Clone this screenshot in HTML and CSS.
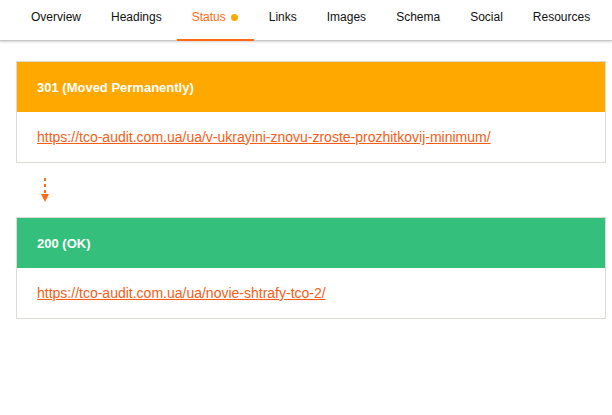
FILE: index.html
```html
<!DOCTYPE html>
<html>
<head>
<meta charset="utf-8">
<link rel="stylesheet" href="styles.css">
</head>
<body>
<nav class="tabs">
  <a class="tab">Overview</a>
  <a class="tab">Headings</a>
  <a class="tab active">Status<span class="dot"></span></a>
  <a class="tab">Links</a>
  <a class="tab">Images</a>
  <a class="tab">Schema</a>
  <a class="tab">Social</a>
  <a class="tab">Resources</a>
</nav>
<main class="content">
  <section class="card">
    <div class="card-head redirect">301 (Moved Permanently)</div>
    <div class="card-body"><a class="url" href="#">https://tco-audit.com.ua/ua/v-ukrayini-znovu-zroste-prozhitkovij-minimum/</a></div>
  </section>
  <div class="arrow">
    <svg width="10" height="26" viewBox="0 0 10 26">
      <line x1="5" y1="0" x2="5" y2="17" stroke="#ff6a13" stroke-width="2" stroke-dasharray="3 3"/>
      <polygon points="1,16 9,16 5,24" fill="#ff6a13"/>
    </svg>
  </div>
  <section class="card">
    <div class="card-head ok">200 (OK)</div>
    <div class="card-body"><a class="url" href="#">https://tco-audit.com.ua/ua/novie-shtrafy-tco-2/</a></div>
  </section>
</main>
</body>
</html>
```

FILE: styles.css
```css
* { box-sizing: border-box; }
html, body { margin: 0; padding: 0; background: #fff; }
body { font-family: "Liberation Sans", Arial, sans-serif; font-size: 12px; color: #111; }

.tabs {
  display: flex;
  padding-left: 16px;
  height: 41px;
  border-bottom: 1px solid #c8c8c8;
  box-shadow: 0 1px 2px rgba(0,0,0,0.18);
}
.tab {
  display: flex;
  align-items: flex-start;
  padding: 10px 15px 0;
  line-height: 14px;
  height: 41px;
  border-bottom: 2px solid transparent;
  color: #111;
  cursor: pointer;
}
.tab.active {
  color: #ff6a13;
  border-bottom-color: #ff6a13;
  padding-right: 16px;
}
.dot {
  display: inline-block;
  width: 7px;
  height: 7px;
  border-radius: 50%;
  background: #ffa800;
  margin: 4px 0 0 5px;
}

.content {
  padding: 20px 6px 0 16px;
}
.card {
  border: 1px solid #dedbd6;
}
.card-head {
  height: 50px;
  padding: 0 20px;
  display: flex;
  align-items: center;
  color: #fff;
  font-weight: bold;
  font-size: 13px;
}
.card-head.redirect { background: #ffa900; }
.card-head.ok { background: #34c07c; }
.card-body {
  height: 50px;
  padding: 0 20px;
  display: flex;
  align-items: center;
  font-size: 14px;
}
.url {
  color: #f45d17;
  text-decoration: underline;
}
.arrow {
  height: 54px;
  padding: 15px 0 0 24px;
}
.arrow svg { display: block; }
```
